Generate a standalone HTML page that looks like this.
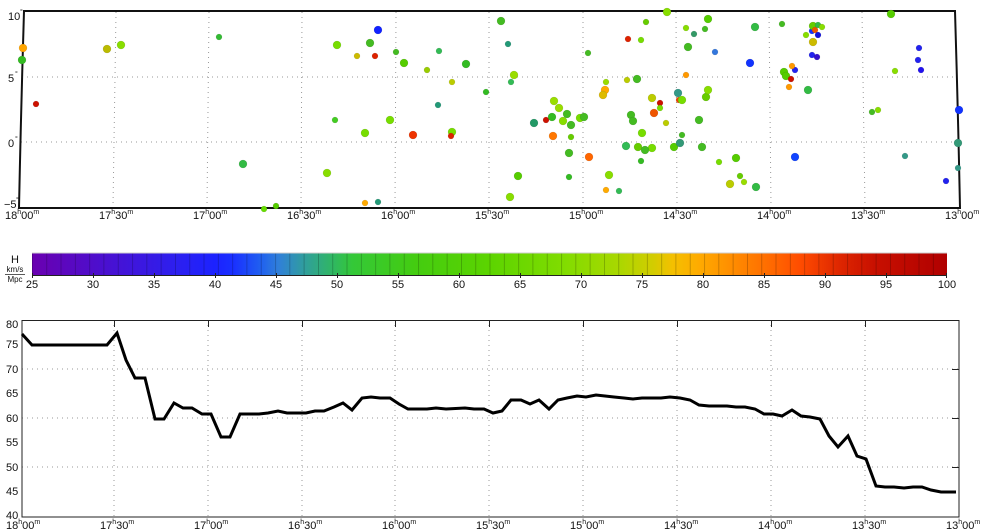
<!DOCTYPE html>
<html><head><meta charset="utf-8"><style>
html,body{margin:0;padding:0;background:#fff;}
svg{display:block;font-family:"Liberation Sans",sans-serif;}
text{font-size:11px;fill:#111;}
.s{font-size:7px;}
</style></head><body>
<svg width="981" height="532" viewBox="0 0 981 532" xmlns="http://www.w3.org/2000/svg">
<defs>
<linearGradient id="cb" x1="0" x2="1" y1="0" y2="0">
<stop offset="0" stop-color="#6a00b0"/>
<stop offset="0.08" stop-color="#4a10d0"/>
<stop offset="0.16" stop-color="#2c20f0"/>
<stop offset="0.2" stop-color="#1c22ff"/>
<stop offset="0.22" stop-color="#1a30ff"/>
<stop offset="0.25" stop-color="#2060f0"/>
<stop offset="0.27" stop-color="#3080d8"/>
<stop offset="0.3" stop-color="#30a098"/>
<stop offset="0.33" stop-color="#30b860"/>
<stop offset="0.35" stop-color="#34c838"/>
<stop offset="0.42" stop-color="#44cc10"/>
<stop offset="0.5" stop-color="#5cd400"/>
<stop offset="0.58" stop-color="#80dc00"/>
<stop offset="0.64" stop-color="#a8d800"/>
<stop offset="0.68" stop-color="#d4cc00"/>
<stop offset="0.7" stop-color="#f4c000"/>
<stop offset="0.73" stop-color="#ffaa00"/>
<stop offset="0.8" stop-color="#ff7000"/>
<stop offset="0.84" stop-color="#ff4c00"/>
<stop offset="0.88" stop-color="#e02800"/>
<stop offset="0.92" stop-color="#c81000"/>
<stop offset="1" stop-color="#b00000"/>
</linearGradient>
<pattern id="seg" x="32" y="0" width="14.3" height="30" patternUnits="userSpaceOnUse">
<rect x="0" y="0" width="0.8" height="30" fill="rgba(0,0,0,0.25)"/>
</pattern>
</defs>

<!-- TOP MAP -->
<g stroke="#999" stroke-width="1" stroke-dasharray="1,4">
<line x1="22" y1="77" x2="957" y2="77"/>
<line x1="21" y1="142" x2="958" y2="142"/>
<line x1="116" y1="12" x2="113" y2="207"/>
<line x1="209" y1="12" x2="207" y2="207"/>
<line x1="302" y1="12" x2="301" y2="207"/>
<line x1="396" y1="12" x2="395" y2="207"/>
<line x1="489" y1="12" x2="489" y2="207"/>
<line x1="583" y1="12" x2="583" y2="207"/>
<line x1="676" y1="12" x2="677" y2="207"/>
<line x1="769" y1="12" x2="771" y2="207"/>
<line x1="862" y1="12" x2="865" y2="207"/>
</g>
<path d="M24,11 L955,11 Q958,110 960,208 L19,208 Q21,110 24,11 Z" fill="none" stroke="#111" stroke-width="2"/>

<g stroke="rgba(0,0,0,0.15)" stroke-width="0.5">
<circle cx="23" cy="48" r="4" fill="#ffa500"/><circle cx="22" cy="60" r="4" fill="#33bb22"/><circle cx="36" cy="104" r="3" fill="#cc1100"/>
<circle cx="107" cy="49" r="4" fill="#bbbb00"/><circle cx="121" cy="45" r="4" fill="#88dd00"/><circle cx="219" cy="37" r="3" fill="#33bb33"/>
<circle cx="243" cy="164" r="4" fill="#33bb44"/><circle cx="264" cy="209" r="3" fill="#66dd00"/><circle cx="276" cy="206" r="3" fill="#55cc00"/>
<circle cx="327" cy="173" r="4" fill="#88dd00"/><circle cx="337" cy="45" r="4" fill="#77dd00"/><circle cx="335" cy="120" r="3" fill="#44cc22"/>
<circle cx="357" cy="56" r="3" fill="#ccbb00"/><circle cx="365" cy="133" r="4" fill="#77dd00"/><circle cx="365" cy="203" r="3" fill="#ffaa00"/>
<circle cx="370" cy="43" r="4" fill="#44bb22"/><circle cx="375" cy="56" r="3" fill="#dd2200"/><circle cx="378" cy="30" r="4" fill="#1122ff"/>
<circle cx="378" cy="202" r="3" fill="#229977"/><circle cx="396" cy="52" r="3" fill="#44bb22"/><circle cx="404" cy="63" r="4" fill="#55cc00"/>
<circle cx="390" cy="120" r="4" fill="#77dd00"/><circle cx="413" cy="135" r="4" fill="#ee3300"/><circle cx="427" cy="70" r="3" fill="#99cc00"/>
<circle cx="439" cy="51" r="3" fill="#33bb55"/><circle cx="438" cy="105" r="3" fill="#229977"/><circle cx="452" cy="132" r="4" fill="#77dd00"/>
<circle cx="452" cy="82" r="3" fill="#bbcc00"/><circle cx="451" cy="136" r="3" fill="#dd2200"/><circle cx="466" cy="64" r="4" fill="#33bb22"/>
<circle cx="486" cy="92" r="3" fill="#33bb22"/><circle cx="501" cy="21" r="4" fill="#44bb22"/><circle cx="508" cy="44" r="3" fill="#229977"/>
<circle cx="514" cy="75" r="4" fill="#99dd00"/><circle cx="511" cy="82" r="3" fill="#33bb55"/><circle cx="518" cy="176" r="4" fill="#55cc00"/>
<circle cx="510" cy="197" r="4" fill="#88dd00"/><circle cx="534" cy="123" r="4" fill="#229966"/><circle cx="546" cy="120" r="3" fill="#cc1100"/>
<circle cx="552" cy="117" r="4" fill="#33bb22"/><circle cx="554" cy="101" r="4" fill="#99dd00"/><circle cx="559" cy="108" r="4" fill="#99dd00"/>
<circle cx="563" cy="121" r="4" fill="#88dd00"/><circle cx="567" cy="114" r="4" fill="#44bb22"/><circle cx="553" cy="136" r="4" fill="#ff7700"/>
<circle cx="569" cy="153" r="4" fill="#44bb22"/><circle cx="571" cy="125" r="4" fill="#44bb22"/><circle cx="571" cy="137" r="3" fill="#66cc00"/>
<circle cx="569" cy="177" r="3" fill="#33bb22"/><circle cx="580" cy="118" r="4" fill="#77dd00"/><circle cx="584" cy="117" r="4" fill="#44bb22"/>
<circle cx="589" cy="157" r="4" fill="#ff6600"/><circle cx="588" cy="53" r="3" fill="#44bb22"/><circle cx="606" cy="82" r="3" fill="#99dd00"/>
<circle cx="605" cy="90" r="4" fill="#ffaa00"/><circle cx="603" cy="95" r="4" fill="#ddbb00"/><circle cx="609" cy="175" r="4" fill="#88dd00"/>
<circle cx="606" cy="190" r="3" fill="#ffaa00"/><circle cx="619" cy="191" r="3" fill="#33bb55"/><circle cx="628" cy="39" r="3" fill="#dd2200"/>
<circle cx="627" cy="80" r="3" fill="#bbcc00"/><circle cx="637" cy="79" r="4" fill="#44bb22"/><circle cx="641" cy="40" r="3" fill="#77dd00"/>
<circle cx="646" cy="22" r="3" fill="#66cc00"/><circle cx="631" cy="115" r="4" fill="#44bb22"/><circle cx="633" cy="121" r="4" fill="#44bb22"/>
<circle cx="626" cy="146" r="4" fill="#33bb55"/><circle cx="638" cy="147" r="4" fill="#66cc00"/><circle cx="641" cy="161" r="3" fill="#33bb22"/>
<circle cx="652" cy="148" r="4" fill="#77dd00"/><circle cx="645" cy="150" r="4" fill="#44bb22"/><circle cx="642" cy="133" r="4" fill="#77dd00"/>
<circle cx="652" cy="98" r="4" fill="#bbcc00"/><circle cx="654" cy="113" r="4" fill="#ee5500"/><circle cx="660" cy="103" r="3" fill="#cc1100"/>
<circle cx="660" cy="108" r="3" fill="#77dd00"/><circle cx="666" cy="123" r="3" fill="#bbcc00"/><circle cx="667" cy="12" r="4" fill="#88dd00"/>
<circle cx="674" cy="147" r="4" fill="#55cc00"/><circle cx="678" cy="93" r="4" fill="#339988"/><circle cx="679" cy="100" r="3" fill="#ee4400"/>
<circle cx="680" cy="143" r="4" fill="#339977"/><circle cx="682" cy="135" r="3" fill="#44bb22"/><circle cx="682" cy="100" r="4" fill="#77dd00"/>
<circle cx="686" cy="28" r="3" fill="#88dd00"/><circle cx="686" cy="75" r="3" fill="#ff9900"/><circle cx="688" cy="47" r="4" fill="#44bb22"/>
<circle cx="694" cy="34" r="3" fill="#339966"/><circle cx="705" cy="29" r="3" fill="#44bb22"/><circle cx="699" cy="120" r="4" fill="#44bb22"/>
<circle cx="702" cy="147" r="4" fill="#44bb22"/><circle cx="706" cy="97" r="4" fill="#66cc00"/><circle cx="708" cy="90" r="4" fill="#88dd00"/>
<circle cx="708" cy="19" r="4" fill="#55cc00"/><circle cx="715" cy="52" r="3" fill="#3377dd"/><circle cx="719" cy="162" r="3" fill="#77dd00"/>
<circle cx="730" cy="184" r="4" fill="#bbcc00"/><circle cx="736" cy="158" r="4" fill="#55cc00"/><circle cx="740" cy="176" r="3" fill="#66cc00"/>
<circle cx="744" cy="182" r="3" fill="#99dd00"/><circle cx="750" cy="63" r="4" fill="#1133ff"/><circle cx="755" cy="27" r="4" fill="#33bb44"/>
<circle cx="756" cy="187" r="4" fill="#33bb44"/><circle cx="782" cy="24" r="3" fill="#44bb22"/><circle cx="784" cy="72" r="4" fill="#55cc00"/>
<circle cx="786" cy="76" r="4" fill="#55cc00"/><circle cx="789" cy="87" r="3" fill="#ff9900"/><circle cx="795" cy="70" r="3" fill="#2222ee"/>
<circle cx="792" cy="66" r="3" fill="#ff9900"/><circle cx="791" cy="79" r="3" fill="#cc1100"/><circle cx="795" cy="157" r="4" fill="#1144ff"/>
<circle cx="806" cy="35" r="3" fill="#88dd00"/><circle cx="808" cy="90" r="4" fill="#33bb44"/><circle cx="812" cy="31" r="3" fill="#1133ff"/>
<circle cx="812" cy="55" r="3" fill="#2222ee"/><circle cx="817" cy="57" r="3" fill="#3311cc"/><circle cx="813" cy="26" r="4" fill="#66cc00"/>
<circle cx="815" cy="30" r="3" fill="#ee5500"/><circle cx="813" cy="42" r="4" fill="#ccbb00"/><circle cx="818" cy="25" r="3" fill="#33bb44"/>
<circle cx="818" cy="35" r="3" fill="#1111dd"/><circle cx="822" cy="27" r="3" fill="#88dd00"/><circle cx="872" cy="112" r="3" fill="#44bb22"/>
<circle cx="878" cy="110" r="3" fill="#88dd00"/><circle cx="891" cy="14" r="4" fill="#55cc00"/><circle cx="895" cy="71" r="3" fill="#88dd00"/>
<circle cx="905" cy="156" r="3" fill="#339988"/><circle cx="919" cy="48" r="3" fill="#2222ee"/><circle cx="918" cy="60" r="3" fill="#2222ee"/>
<circle cx="921" cy="70" r="3" fill="#2211ee"/><circle cx="946" cy="181" r="3" fill="#2222ee"/><circle cx="959" cy="110" r="4" fill="#1133ff"/>
<circle cx="958" cy="143" r="4" fill="#339977"/><circle cx="958" cy="168" r="3" fill="#339988"/>
</g>

<g>
<text x="8" y="20">10</text><text x="20" y="14" class="s">°</text>
<text x="8" y="82">5</text><text x="15" y="76" class="s">°</text>
<text x="8" y="147">0</text><text x="15" y="141" class="s">°</text>
<text x="4" y="208">−5</text><text x="16" y="202" class="s">°</text>
</g>
<g id="tl">
<text x="5" y="219">18<tspan class="s" dy="-5">h</tspan><tspan dy="5">00</tspan><tspan class="s" dy="-5">m</tspan></text>
<text x="99" y="219">17<tspan class="s" dy="-5">h</tspan><tspan dy="5">30</tspan><tspan class="s" dy="-5">m</tspan></text>
<text x="193" y="219">17<tspan class="s" dy="-5">h</tspan><tspan dy="5">00</tspan><tspan class="s" dy="-5">m</tspan></text>
<text x="287" y="219">16<tspan class="s" dy="-5">h</tspan><tspan dy="5">30</tspan><tspan class="s" dy="-5">m</tspan></text>
<text x="381" y="219">16<tspan class="s" dy="-5">h</tspan><tspan dy="5">00</tspan><tspan class="s" dy="-5">m</tspan></text>
<text x="475" y="219">15<tspan class="s" dy="-5">h</tspan><tspan dy="5">30</tspan><tspan class="s" dy="-5">m</tspan></text>
<text x="569" y="219">15<tspan class="s" dy="-5">h</tspan><tspan dy="5">00</tspan><tspan class="s" dy="-5">m</tspan></text>
<text x="663" y="219">14<tspan class="s" dy="-5">h</tspan><tspan dy="5">30</tspan><tspan class="s" dy="-5">m</tspan></text>
<text x="757" y="219">14<tspan class="s" dy="-5">h</tspan><tspan dy="5">00</tspan><tspan class="s" dy="-5">m</tspan></text>
<text x="851" y="219">13<tspan class="s" dy="-5">h</tspan><tspan dy="5">30</tspan><tspan class="s" dy="-5">m</tspan></text>
<text x="945" y="219">13<tspan class="s" dy="-5">h</tspan><tspan dy="5">00</tspan><tspan class="s" dy="-5">m</tspan></text>
</g>

<!-- COLORBAR -->
<rect x="32" y="253" width="915" height="22" fill="url(#cb)"/>
<rect x="32" y="253" width="915" height="22" fill="url(#seg)"/>
<rect x="32" y="252.5" width="915" height="1" fill="#ccc"/>
<line x1="32" y1="275.5" x2="947" y2="275.5" stroke="#222" stroke-width="1"/>
<g stroke="#222" stroke-width="1">
<line x1="32.5" y1="273" x2="32.5" y2="278"/><line x1="93.5" y1="273" x2="93.5" y2="278"/><line x1="154.5" y1="273" x2="154.5" y2="278"/>
<line x1="215.5" y1="273" x2="215.5" y2="278"/><line x1="276.5" y1="273" x2="276.5" y2="278"/><line x1="337.5" y1="273" x2="337.5" y2="278"/>
<line x1="398.5" y1="273" x2="398.5" y2="278"/><line x1="459.5" y1="273" x2="459.5" y2="278"/><line x1="520.5" y1="273" x2="520.5" y2="278"/>
<line x1="581.5" y1="273" x2="581.5" y2="278"/><line x1="642.5" y1="273" x2="642.5" y2="278"/><line x1="703.5" y1="273" x2="703.5" y2="278"/>
<line x1="764.5" y1="273" x2="764.5" y2="278"/><line x1="825.5" y1="273" x2="825.5" y2="278"/><line x1="886.5" y1="273" x2="886.5" y2="278"/>
<line x1="946.5" y1="273" x2="946.5" y2="278"/>
</g>
<g text-anchor="middle">
<text x="32" y="288">25</text><text x="93" y="288">30</text><text x="154" y="288">35</text><text x="215" y="288">40</text>
<text x="276" y="288">45</text><text x="337" y="288">50</text><text x="398" y="288">55</text><text x="459" y="288">60</text>
<text x="520" y="288">65</text><text x="581" y="288">70</text><text x="642" y="288">75</text><text x="703" y="288">80</text>
<text x="764" y="288">85</text><text x="825" y="288">90</text><text x="886" y="288">95</text><text x="947" y="288">100</text>
<text x="15" y="263" style="font-size:11px">H</text>
<text x="15" y="272" style="font-size:8px">km/s</text>
<text x="15" y="282" style="font-size:8px">Mpc</text>
</g>
<line x1="5" y1="274.5" x2="25" y2="274.5" stroke="#222" stroke-width="0.8"/>

<!-- BOTTOM CHART -->
<g stroke="#999" stroke-width="1" stroke-dasharray="1,4">
<line x1="22" y1="369" x2="959" y2="369"/>
<line x1="22" y1="418" x2="959" y2="418"/>
<line x1="22" y1="467" x2="959" y2="467"/>
<line x1="114" y1="320" x2="114" y2="517"/><line x1="208" y1="320" x2="208" y2="517"/>
<line x1="302" y1="320" x2="302" y2="517"/><line x1="395" y1="320" x2="395" y2="517"/>
<line x1="489" y1="320" x2="489" y2="517"/><line x1="583" y1="320" x2="583" y2="517"/>
<line x1="677" y1="320" x2="677" y2="517"/><line x1="771" y1="320" x2="771" y2="517"/>
<line x1="865" y1="320" x2="865" y2="517"/>
</g>
<g stroke="#222" stroke-width="1">
<line x1="114.5" y1="320" x2="114.5" y2="327"/><line x1="208.5" y1="320" x2="208.5" y2="327"/><line x1="302.5" y1="320" x2="302.5" y2="327"/>
<line x1="395.5" y1="320" x2="395.5" y2="327"/><line x1="489.5" y1="320" x2="489.5" y2="327"/><line x1="583.5" y1="320" x2="583.5" y2="327"/>
<line x1="677.5" y1="320" x2="677.5" y2="327"/><line x1="771.5" y1="320" x2="771.5" y2="327"/><line x1="865.5" y1="320" x2="865.5" y2="327"/>
<line x1="952" y1="369.5" x2="959" y2="369.5"/><line x1="952" y1="418.5" x2="959" y2="418.5"/><line x1="952" y1="467.5" x2="959" y2="467.5"/>
</g>
<rect x="22" y="320.5" width="937" height="196.5" fill="none" stroke="#222" stroke-width="1"/>
<polyline fill="none" stroke="#000" stroke-width="3" stroke-linejoin="miter" points="22,334 32,345 107,345 117,333 126,360 135,378 145,378 155,419 164,419 174,403 183,408 192,408 202,414 211,414 221,437 230,437 240,414 259,414 268,413 278,411 287,413 306,413 315,411 324,411 334,407 343,403 352,410 362,398 371,397 380,398 390,398 399,404 408,409 427,409 436,408 446,409 465,408 474,409 484,409 493,413 502,411 511,400 521,400 530,404 539,400 549,409 558,400 567,398 577,396 586,397 596,395 605,396 614,397 624,398 633,399 642,398 652,398 661,398 670,397 680,398 690,400 699,405 709,406 727,406 736,407 745,407 755,409 764,414 773,414 782,416 792,410 801,416 810,417 820,419 829,436 838,447 848,436 857,456 866,459 876,486 885,487 894,487 904,488 913,487 922,487 931,490 941,492 956,492"/>
<g>
<text x="6" y="328">80</text><text x="6" y="348">75</text><text x="6" y="373">70</text><text x="6" y="397">65</text>
<text x="6" y="422">60</text><text x="6" y="446">55</text><text x="6" y="471">50</text><text x="6" y="495">45</text><text x="6" y="519">40</text>
</g>
<g transform="translate(1,310)">
<text x="5" y="219">18<tspan class="s" dy="-5">h</tspan><tspan dy="5">00</tspan><tspan class="s" dy="-5">m</tspan></text>
<text x="99" y="219">17<tspan class="s" dy="-5">h</tspan><tspan dy="5">30</tspan><tspan class="s" dy="-5">m</tspan></text>
<text x="193" y="219">17<tspan class="s" dy="-5">h</tspan><tspan dy="5">00</tspan><tspan class="s" dy="-5">m</tspan></text>
<text x="287" y="219">16<tspan class="s" dy="-5">h</tspan><tspan dy="5">30</tspan><tspan class="s" dy="-5">m</tspan></text>
<text x="381" y="219">16<tspan class="s" dy="-5">h</tspan><tspan dy="5">00</tspan><tspan class="s" dy="-5">m</tspan></text>
<text x="475" y="219">15<tspan class="s" dy="-5">h</tspan><tspan dy="5">30</tspan><tspan class="s" dy="-5">m</tspan></text>
<text x="569" y="219">15<tspan class="s" dy="-5">h</tspan><tspan dy="5">00</tspan><tspan class="s" dy="-5">m</tspan></text>
<text x="663" y="219">14<tspan class="s" dy="-5">h</tspan><tspan dy="5">30</tspan><tspan class="s" dy="-5">m</tspan></text>
<text x="757" y="219">14<tspan class="s" dy="-5">h</tspan><tspan dy="5">00</tspan><tspan class="s" dy="-5">m</tspan></text>
<text x="851" y="219">13<tspan class="s" dy="-5">h</tspan><tspan dy="5">30</tspan><tspan class="s" dy="-5">m</tspan></text>
<text x="945" y="219">13<tspan class="s" dy="-5">h</tspan><tspan dy="5">00</tspan><tspan class="s" dy="-5">m</tspan></text>
</g>
</svg>
</body></html>
